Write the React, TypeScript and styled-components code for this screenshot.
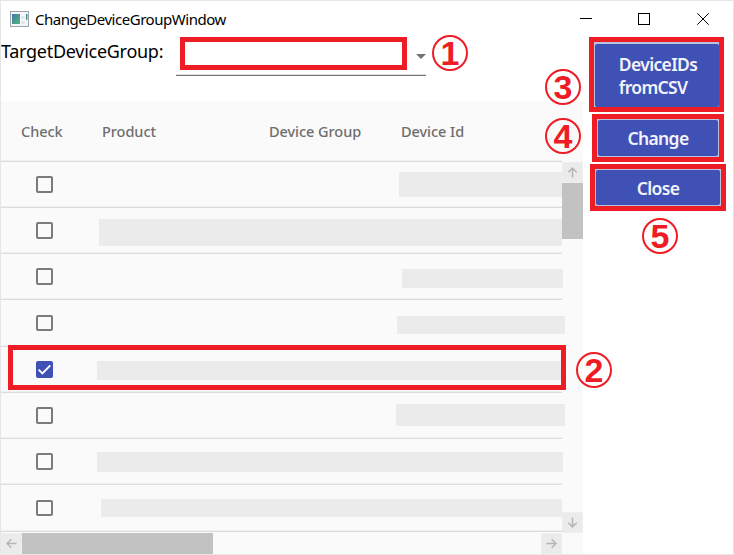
import React from "react";
import styled, { createGlobalStyle } from "styled-components";

const GlobalStyle = createGlobalStyle`
  * { box-sizing: border-box; }
  body { margin: 0; background: #fff; }
`;

const RED = "#ee1c25";

const Window = styled.main`
  position: relative;
  display: flex;
  flex-direction: column;
  width: 734px;
  height: 555px;
  overflow: hidden;
  background: #fff;
  border: 1px solid #e6e6e6;
  font-family: "Noto Sans", "Open Sans", sans-serif;
`;

const TitleBar = styled.header`
  display: flex;
  align-items: center;
  height: 36px;
  padding: 0 1px 0 9px;
`;

const Title = styled.h1`
  flex: 1;
  margin: 0 0 0 6px;
  font-size: 15px;
  line-height: 20px;
  font-weight: 400;
  letter-spacing: -0.47px;
  color: #000;
`;

const WindowControls = styled.div`
  display: flex;
  height: 100%;
`;

const ControlButton = styled.button`
  display: flex;
  align-items: center;
  justify-content: center;
  width: 58.5px;
  padding: 0;
  border: 0;
  background: none;
`;

const Content = styled.div`
  display: flex;
  height: 517px;
`;

const MainPane = styled.section`
  flex: none;
  width: 582px;
`;

const TargetBar = styled.div`
  display: flex;
  height: 64px;
`;

const TargetLabel = styled.label`
  width: 175px;
  padding-top: 1px;
  font-size: 18px;
  line-height: 26px;
  letter-spacing: -0.28px;
  white-space: nowrap;
  color: #000;
`;

const ComboBox = styled.div`
  display: flex;
  align-items: center;
  justify-content: flex-end;
  width: 250px;
  height: 39px;
  border-bottom: 1px solid #757575;
  box-shadow: inset 0 -1px #dedede;
`;

const Table = styled.div`
  height: 453px;
  background: #fafafa;
`;

const HeaderRow = styled.div`
  display: grid;
  grid-template-columns: 101px 167px 132px 1fr;
  align-items: center;
  height: 61px;
  border-bottom: 1px solid #dcdcdc;
  width: 561px;
  box-shadow: inset 0 -1px #efefef;
`;

const HeaderCell = styled.div<{ $indent?: number }>`
  padding-left: ${(p) => p.$indent ?? 0}px;
  font-size: 14.5px;
  font-weight: 500;
  line-height: 20px;
  letter-spacing: -0.05px;
  color: #6e6e6e;
`;

const TableBody = styled.div`
  display: flex;
  height: 371px;
`;

const Rows = styled.div`
  flex: none;
  width: 561px;
`;

const Row = styled.div<{ $height: number }>`
  display: flex;
  height: ${(p) => p.$height}px;
  border-bottom: 1px solid #dcdcdc;
  box-shadow: inset 0 -1px #efefef;
`;

const CheckCell = styled.div`
  flex: none;
  width: 95px;
  padding: 14px 0 0 35px;
`;

const CheckMark = styled.span<{ $checked: boolean; $short: boolean }>`
  display: flex;
  align-items: center;
  justify-content: center;
  width: 17px;
  height: ${(p) => (p.$short ? 16 : 17)}px;
  margin-top: ${(p) => (p.$short ? 1 : 0)}px;
  border: ${(p) => (p.$checked ? "0" : "2px solid #7b7b7b")};
  border-radius: 2px;
  background: ${(p) => (p.$checked ? "#3f51b5" : "transparent")};
`;

const Redacted = styled.div<{ $indent: number; $top: number; $width: number; $height: number }>`
  flex: none;
  width: ${(p) => p.$width}px;
  height: ${(p) => p.$height}px;
  margin: ${(p) => p.$top}px 0 0 ${(p) => p.$indent}px;
  background: #ebebeb;
`;

const ScrollBar = styled.div<{ $horizontal?: boolean }>`
  display: flex;
  flex-direction: ${(p) => (p.$horizontal ? "row" : "column")};
  justify-content: space-between;
  width: ${(p) => (p.$horizontal ? 561 : 21)}px;
  height: ${(p) => (p.$horizontal ? 21 : 371)}px;
`;

const ScrollButton = styled.div`
  display: flex;
  align-items: center;
  justify-content: center;
  flex: none;
  width: 21px;
  height: 21px;
  background: #ebebeb;
  border: 1px solid #efefef;
`;

const VerticalThumb = styled.div`
  height: 56px;
  margin-bottom: auto;
  background: #c2c2c2;
`;

const HorizontalThumb = styled.div`
  width: 191px;
  margin-right: auto;
  background: #c2c2c2;
`;

const Actions = styled.aside`
  display: flex;
  flex-direction: column;
  align-items: flex-start;
  width: 150px;
  padding-left: 6px;
`;

const ActionFrame = styled.div<{ $offset: number; $width: number; $height: number; $gap: number }>`
  display: flex;
  flex: none;
  width: ${(p) => p.$width}px;
  height: ${(p) => p.$height}px;
  margin: 0 0 ${(p) => p.$gap}px ${(p) => p.$offset}px;
  border: 5px solid ${RED};
  background: #b9c2dc;
`;

const ActionButton = styled.button<{ $tall?: boolean }>`
  flex: 1;
  margin: ${(p) => (p.$tall ? "2px 0 0 1px" : "1px")};
  padding: ${(p) => (p.$tall ? "0 0 0 2px" : "1px 0 0")};
  border: 0;
  border-radius: 2px;
  background: #3f51b5;
  color: #f2f3fb;
  font-family: inherit;
  font-size: 17.5px;
  font-weight: 600;
  line-height: 23px;
  letter-spacing: -0.65px;
  text-align: center;
`;

const ButtonText = styled.span`
  display: inline-block;
  text-align: left;
`;

const Highlight = styled.div<{ $x: number; $y: number; $width: number; $height: number }>`
  position: absolute;
  left: ${(p) => p.$x - 1}px;
  top: ${(p) => p.$y - 1}px;
  width: ${(p) => p.$width}px;
  height: ${(p) => p.$height}px;
  border: 5px solid ${RED};
`;

const Callout = styled.span<{ $x: number; $y: number }>`
  position: absolute;
  left: ${(p) => p.$x - 19}px;
  top: ${(p) => p.$y - 19}px;
  width: 36px;
  height: 36px;
  border: 2px solid ${RED};
  border-radius: 50%;
  font-family: "Liberation Sans", sans-serif;
  font-size: 34px;
  font-weight: 700;
  line-height: 32px;
  text-align: center;
  color: ${RED};
`;

const AppIcon = () => (
  <svg width="19" height="16" viewBox="0 0 19 16">
    <defs>
      <linearGradient id="screen" x1="0" y1="0" x2="1" y2="1">
        <stop offset="0" stopColor="#3e78a8" />
        <stop offset="1" stopColor="#58b67c" />
      </linearGradient>
    </defs>
    <rect x="0.5" y="0.5" width="18" height="15" fill="#f4f6f7" stroke="#9ba5ad" />
    <rect x="2" y="3" width="8" height="10" fill="url(#screen)" />
    <path d="M11 6.5h4M11 11.5h4" stroke="#dde1e4" strokeWidth="2" />
    <rect x="16" y="3" width="1.5" height="6" fill="url(#screen)" />
  </svg>
);

type Direction = "up" | "down" | "left" | "right";
const rotation: Record<Direction, number> = { up: 0, right: 90, down: 180, left: 270 };

const Arrow = ({ to }: { to: Direction }) => (
  <svg width="11" height="11" viewBox="0 0 11 11">
    <path
      d="M5.5 10.5V1M1.3 5.3L5.5 1.1L9.7 5.3"
      fill="none"
      stroke="#b5b5b5"
      strokeWidth="1.5"
      transform={`rotate(${rotation[to]} 5.5 5.5)`}
    />
  </svg>
);

interface DeviceRow {
  height: number;
  left: number;
  top: number;
  width: number;
  barHeight: number;
  checked?: boolean;
  short?: boolean;
}

const devices: DeviceRow[] = [
  { height: 46, left: 303, top: 10, width: 163, barHeight: 25 },
  { height: 46, left: 3, top: 11, width: 463, barHeight: 27 },
  { height: 46, left: 306, top: 15, width: 161, barHeight: 19 },
  { height: 47, left: 301, top: 16, width: 168, barHeight: 18, short: true },
  { height: 46, left: 1, top: 14, width: 465, barHeight: 19, checked: true },
  { height: 46, left: 300, top: 11, width: 169, barHeight: 22 },
  { height: 46, left: 1, top: 13, width: 466, barHeight: 20 },
  { height: 47, left: 5, top: 14, width: 461, barHeight: 18, short: true },
];

export default function App() {
  return (
    <Window>
      <GlobalStyle />
      <TitleBar>
        <AppIcon />
        <Title>ChangeDeviceGroupWindow</Title>
        <WindowControls>
          <ControlButton aria-label="Minimize">
            <svg width="12" height="12"><path d="M0 5.5h12" stroke="#000" /></svg>
          </ControlButton>
          <ControlButton aria-label="Maximize">
            <svg width="12" height="12"><rect x="0.5" y="0.5" width="11" height="11" fill="none" stroke="#000" /></svg>
          </ControlButton>
          <ControlButton aria-label="Close window">
            <svg width="12" height="12"><path d="M0.3 0.3L11.7 11.7M11.7 0.3L0.3 11.7" stroke="#000" /></svg>
          </ControlButton>
        </WindowControls>
      </TitleBar>

      <Content>
        <MainPane>
          <TargetBar>
            <TargetLabel>TargetDeviceGroup:</TargetLabel>
            <ComboBox>
              <svg width="10" height="5"><path d="M0 0h10L5 5z" fill="#757575" /></svg>
            </ComboBox>
          </TargetBar>
          <Table>
            <HeaderRow>
              <HeaderCell $indent={20}>Check</HeaderCell>
              <HeaderCell>Product</HeaderCell>
              <HeaderCell>Device Group</HeaderCell>
              <HeaderCell>Device Id</HeaderCell>
            </HeaderRow>
            <TableBody>
              <Rows>
                {devices.map((d, i) => (
                  <Row key={i} $height={d.height}>
                    <CheckCell>
                      <CheckMark $checked={!!d.checked} $short={!!d.short}>
                        {d.checked && (
                          <svg width="15" height="15" viewBox="0 0 15 15">
                            <path d="M1.6 7.6L5.4 11.4L13.3 3.4" fill="none" stroke="#fff" strokeWidth="1.9" />
                          </svg>
                        )}
                      </CheckMark>
                    </CheckCell>
                    <Redacted $indent={d.left} $top={d.top} $width={d.width} $height={d.barHeight} />
                  </Row>
                ))}
              </Rows>
              <ScrollBar>
                <ScrollButton><Arrow to="up" /></ScrollButton>
                <VerticalThumb />
                <ScrollButton><Arrow to="down" /></ScrollButton>
              </ScrollBar>
            </TableBody>
            <ScrollBar $horizontal>
              <ScrollButton><Arrow to="left" /></ScrollButton>
              <HorizontalThumb />
              <ScrollButton><Arrow to="right" /></ScrollButton>
            </ScrollBar>
          </Table>
        </MainPane>

        <Actions>
          <ActionFrame $offset={0} $width={135} $height={75} $gap={2}>
            <ActionButton $tall>
              <ButtonText>DeviceIDs<br />fromCSV</ButtonText>
            </ActionButton>
          </ActionFrame>
          <ActionFrame $offset={3} $width={132} $height={48} $gap={2}>
            <ActionButton>Change</ActionButton>
          </ActionFrame>
          <ActionFrame $offset={1} $width={136} $height={47} $gap={0}>
            <ActionButton>Close</ActionButton>
          </ActionFrame>
        </Actions>
      </Content>

      <Highlight $x={180} $y={37} $width={227} $height={33} />
      <Highlight $x={8} $y={345} $width={558} $height={45} />
      <Callout $x={450} $y={53}>1</Callout>
      <Callout $x={594} $y={370}>2</Callout>
      <Callout $x={563} $y={87}>3</Callout>
      <Callout $x={563} $y={136}>4</Callout>
      <Callout $x={660} $y={236}>5</Callout>
    </Window>
  );
}
